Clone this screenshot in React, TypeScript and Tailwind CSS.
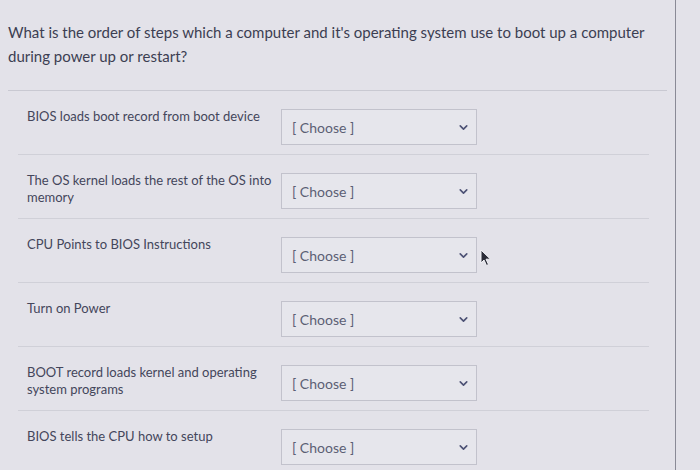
import { ChevronDown } from "lucide-react";

const steps = [
  "BIOS loads boot record from boot device",
  "The OS kernel loads the rest of the OS into memory",
  "CPU Points to BIOS Instructions",
  "Turn on Power",
  "BOOT record loads kernel and operating system programs",
  "BIOS tells the CPU how to setup",
];

function Cursor() {
  return (
    <svg width="12" height="18" viewBox="0 0 12 18" className="mt-[30px] ml-[3px]">
      <path d="M1 1 L1 14 L4 11 L6.5 16.5 L8.5 15.5 L6 10.2 L10.5 10.2 Z" fill="#2b2c38" stroke="#f2f2f6" strokeWidth="1" />
    </svg>
  );
}

function ChooseSelect() {
  return (
    <div className="relative mt-[18px] w-[196px] h-[36px] shrink-0">
      <select
        defaultValue=""
        className="appearance-none w-full h-full border border-[#c2c2cc] bg-[#e6e6ec] pl-[10px] pr-6 text-[14px] text-[#5c5f74] outline-none"
      >
        <option value="">[ Choose ]</option>
        <option value="1">1</option>
        <option value="2">2</option>
        <option value="3">3</option>
        <option value="4">4</option>
        <option value="5">5</option>
        <option value="6">6</option>
      </select>
      <ChevronDown
        size={13}
        strokeWidth={3}
        className="pointer-events-none absolute right-[7px] top-[12px] text-[#4d5275]"
      />
    </div>
  );
}

export default function App() {
  return (
    <div
      className="w-[700px] h-[470px] overflow-hidden bg-[#e3e2e9] text-[#3c3e52]"
      style={{ fontFamily: "Lato, 'Open Sans', sans-serif" }}
    >
      <div className="w-[676px] h-full border-r border-[#8a8a96]">
        <div className="mx-[8px] pt-[20px] pb-[22px] border-b border-[#c9c9d2]">
          <p className="text-[15px] leading-[24px] w-[660px]">
            What is the order of steps which a computer and it's operating system use to boot up a computer during
            power up or restart?
          </p>
        </div>

        <div className="pl-[18px] pr-[26px]">
          {steps.map((s, i) => (
            <div key={s} className="flex h-[64px] border-b border-[#d0d0d8]">
              <div className="w-[263px] shrink-0 pl-[9px] pt-[17px] pr-1 text-[13px] leading-[17px] text-[#44465b]">
                {s}
              </div>
              <ChooseSelect />
              {i === 2 && <Cursor />}
            </div>
          ))}
        </div>
      </div>
    </div>
  );
}
